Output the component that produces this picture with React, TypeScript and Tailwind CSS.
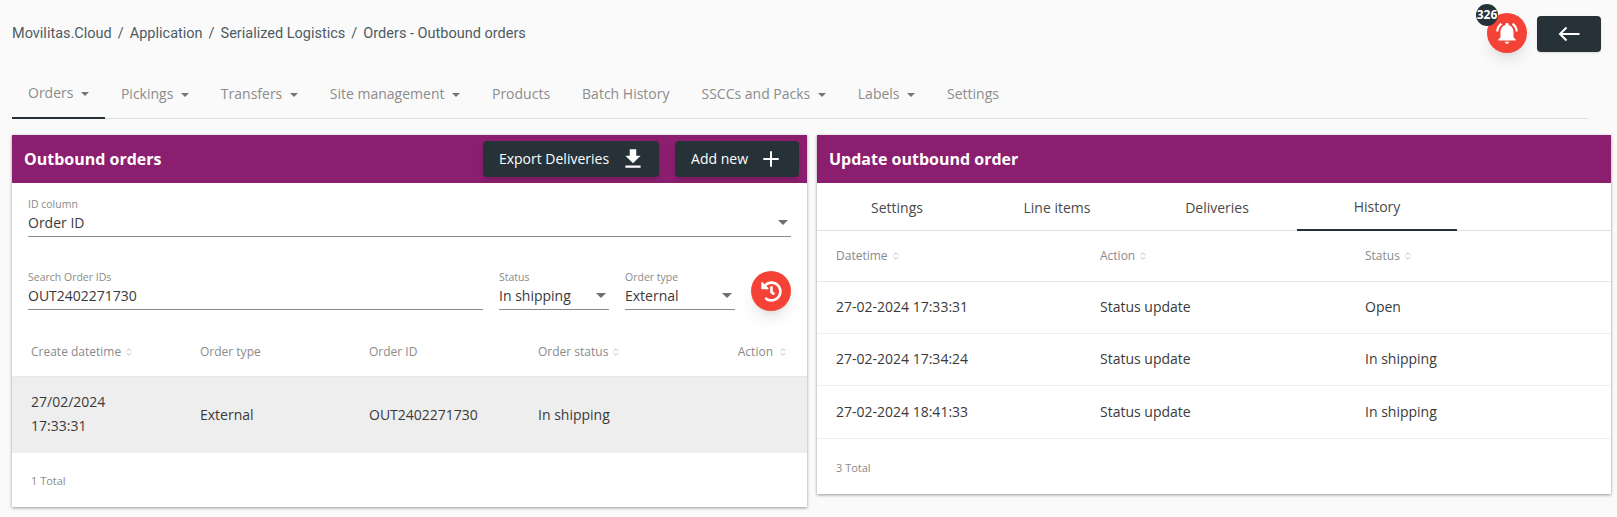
import { ChevronsUpDown, Plus } from "lucide-react";
import { FaHistory } from "react-icons/fa";
import { MdFileDownload, MdNotificationsActive } from "react-icons/md";

const navTabs = [
  { label: "Orders", caret: true, active: true },
  { label: "Pickings", caret: true },
  { label: "Transfers", caret: true },
  { label: "Site management", caret: true },
  { label: "Products" },
  { label: "Batch History" },
  { label: "SSCCs and Packs", caret: true },
  { label: "Labels", caret: true },
  { label: "Settings" },
];

const history = [
  ["27-02-2024 17:33:31", "Status update", "Open"],
  ["27-02-2024 17:34:24", "Status update", "In shipping"],
  ["27-02-2024 18:41:33", "Status update", "In shipping"],
];

function Caret({ className = "" }: { className?: string }) {
  return <span className={`inline-block h-0 w-0 border-x-transparent border-t-current ${className}`} />;
}

function SortIcon() {
  return <ChevronsUpDown size={10} strokeWidth={1.5} className="ml-[3px] text-[#9e9e9e]" />;
}

function Field({ label, value, select, className = "" }: { label: string; value: string; select?: boolean; className?: string }) {
  return (
    <div className={`border-b border-[#8a8a8a] ${className}`}>
      <div className="text-[10.5px] leading-[14px] text-[#8a8a8a]">{label}</div>
      <div className="flex h-[25px] items-center justify-between pb-[2px] text-[14px] text-[#3a3a3a]">
        <span>{value}</span>
        {select && <Caret className="mr-[3px] border-x-[5px] border-t-[5px] text-[#6f6f6f]" />}
      </div>
    </div>
  );
}

function PanelHeader({ title, children }: { title: string; children?: React.ReactNode }) {
  return (
    <div className="flex h-[48px] items-center justify-between bg-[#8b1e6f] pl-[12px] pr-[8px]">
      <h2 className="text-[16px] font-bold text-white">{title}</h2>
      {children}
    </div>
  );
}

function DarkButton({ label, children }: { label: string; children: React.ReactNode }) {
  return (
    <button className="flex h-[36px] items-center rounded bg-[#263238] pb-[1px] pl-[16px] text-[14px] text-white shadow-md">
      {label}
      {children}
    </button>
  );
}

export default function App() {
  return (
    <div className="h-[517px] overflow-hidden bg-[#fafafa] pl-[12px] pr-[6px] font-['Open_Sans',sans-serif]">
      <div className="flex h-[66px] items-center justify-between">
        <div className="flex gap-[6px] pt-[1px] font-['Roboto',sans-serif] text-[14.5px] text-[#4f5b62]">
          <span>Movilitas.Cloud</span>
          <span>/</span>
          <span>Application</span>
          <span>/</span>
          <span>Serialized Logistics</span>
          <span>/</span>
          <span>Orders - Outbound orders</span>
        </div>
        <div className="flex items-center gap-[10px] pr-[10px]">
          <div className="relative">
            <button className="flex h-[40px] w-[40px] items-center justify-center rounded-full bg-[#f44336] text-white shadow-lg">
              <MdNotificationsActive size={26} />
            </button>
            <span className="absolute left-[-11px] top-[-9px] flex h-[22px] w-[22px] items-center justify-center rounded-full bg-[#263238] text-[12px] font-bold text-white">
              326
            </span>
          </div>
          <button className="mt-[2px] flex h-[36px] w-[64px] items-center justify-center rounded bg-[#263238] text-white shadow">
            <svg width="22" height="16" viewBox="0 0 22 16" fill="none" stroke="currentColor" strokeWidth="2">
              <path d="M21.5 8H2M8.5 1.5L2 8l6.5 6.5" />
            </svg>
          </button>
        </div>
      </div>

      <nav className="mr-[23px] flex h-[53px] border-b border-[#e0e0e0] text-[14px] text-[#8c8c8c]">
        {navTabs.map((t) => (
          <div
            key={t.label}
            className={`flex h-[53px] items-center px-[16px] pt-[1px] ${t.active ? "border-b-2 border-[#263238]" : ""}`}
          >
            {t.label}
            {t.caret && <Caret className="ml-[7.5px] mt-[4px] border-x-[4px] border-t-[4px] text-[#757575]" />}
          </div>
        ))}
      </nav>

      <div className="mt-[16px] grid grid-cols-[795px_794px] items-start gap-[10px]">
        <section className="h-[372px] bg-white shadow-[0_1px_3px_rgba(0,0,0,0.4)]">
          <PanelHeader title="Outbound orders">
            <div className="flex gap-[16px]">
              <DarkButton label="Export Deliveries">
                <MdFileDownload size={26} className="ml-[11px] mr-[13px]" />
              </DarkButton>
              <DarkButton label="Add new">
                <Plus size={24} strokeWidth={2} className="ml-[11px] mr-[16px]" />
              </DarkButton>
            </div>
          </PanelHeader>

          <div className="px-[16px] pt-[14px]">
            <Field label="ID column" value="Order ID" select />
            <div className="mt-[33px] flex items-end">
              <Field label="Search Order IDs" value="OUT2402271730" className="w-[455px]" />
              <Field label="Status" value="In shipping" select className="ml-[16px] w-[110px]" />
              <Field label="Order type" value="External" select className="ml-[16px] w-[110px]" />
              <button className="mb-[-1px] ml-[16px] flex h-[40px] w-[40px] items-center justify-center rounded-full bg-[#f44336] text-white shadow-lg">
                <FaHistory size={21} />
              </button>
            </div>
          </div>

          <div className="mt-[22px] grid h-[45px] grid-cols-[169px_169px_169px_1fr_auto] items-center border-b border-[#e8e8e8] pb-[4px] pl-[19px] pr-[19px] text-[12px] text-[#8a8a8a]">
            <div className="flex items-center">Create datetime<SortIcon /></div>
            <div>Order type</div>
            <div>Order ID</div>
            <div className="flex items-center">Order status<SortIcon /></div>
            <div className="flex items-center">Action<span className="ml-[2px]"><SortIcon /></span></div>
          </div>
          <div className="grid h-[76px] grid-cols-[169px_169px_169px_1fr] items-center bg-[#eeeeee] pb-[2px] pl-[19px] text-[14px] text-[#3a3a3a]">
            <div className="leading-[24px]">27/02/2024<br />17:33:31</div>
            <div>External</div>
            <div>OUT2402271730</div>
            <div>In shipping</div>
          </div>
          <div className="flex h-[56px] items-center pl-[19px] text-[11px] text-[#8a8a8a]">1 Total</div>
        </section>

        <section className="h-[359px] bg-white shadow-[0_1px_3px_rgba(0,0,0,0.4)]">
          <PanelHeader title="Update outbound order" />
          <div className="flex h-[48px] border-b border-[#e0e0e0] text-[14px] text-[#4a4a4a]">
            {["Settings", "Line items", "Deliveries", "History"].map((t) => (
              <div
                key={t}
                className={`flex h-[48px] w-[160px] items-center justify-center ${t === "History" ? "border-b-2 border-[#263238]" : ""}`}
              >
                {t}
              </div>
            ))}
          </div>
          <div className="grid h-[51px] grid-cols-[264px_265px_1fr] items-center border-b border-[#e8e8e8] pl-[19px] text-[12px] text-[#8a8a8a]">
            <div className="flex items-center">Datetime<SortIcon /></div>
            <div className="flex items-center">Action<SortIcon /></div>
            <div className="flex items-center">Status<SortIcon /></div>
          </div>
          {history.map((row, r) => (
            <div
              key={row[0]}
              className={`grid grid-cols-[264px_265px_1fr] items-center border-b border-[#eeeeee] pb-[2px] pl-[19px] text-[14px] text-[#3a3a3a] ${r === 2 ? "h-[53px]" : "h-[52px]"}`}
            >
              {row.map((c, i) => (
                <div key={i}>{c}</div>
              ))}
            </div>
          ))}
          <div className="flex h-[54px] items-center pl-[19px] pt-[4px] text-[11px] text-[#8a8a8a]">3 Total</div>
        </section>
      </div>
    </div>
  );
}
